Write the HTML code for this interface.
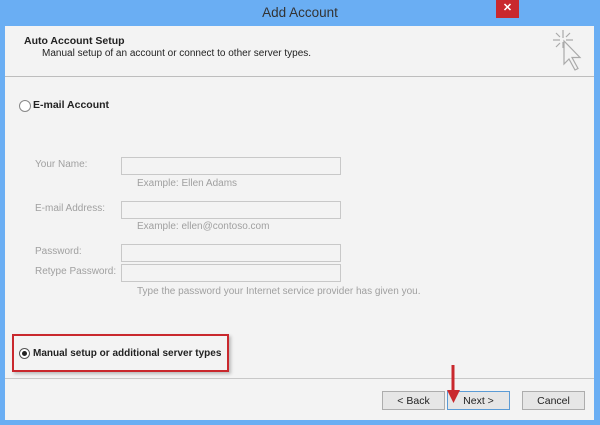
<!DOCTYPE html>
<html><head><style>
body{margin:0;width:600px;height:425px;background:#6aaef3;position:relative;overflow:hidden;font-family:"Liberation Sans",sans-serif;font-size:11px;color:#222}
.a{position:absolute}
.in{position:absolute;left:121px;width:218px;height:16px;border:1px solid #c8c8c8;background:#f3f3f3}
.lb{position:absolute;left:35px;color:#a0a0a0;font-size:10px}
.ex{position:absolute;left:137px;color:#a0a0a0;font-size:10px}
.btn{position:absolute;top:391px;height:17px;border:1px solid #adadad;background:#e6e6e6;text-align:center;line-height:18px;font-size:10.5px}
</style></head><body>
<div class="a" style="left:0;width:600px;text-align:center;top:5px;font-size:13.5px;color:#333">Add Account</div>
<div class="a" style="left:496px;top:0;width:23px;height:18px;background:#c9282d;color:#fff;text-align:center;line-height:17px;font-size:11px;font-weight:bold">✕</div>
<div class="a" style="left:5px;top:26px;width:589px;height:394px;background:#f3f3f3"></div>
<div class="a" style="left:5px;top:76px;width:589px;height:1px;background:#bdbdbd"></div>
<div class="a" style="left:24px;top:35px;font-weight:bold;font-size:10.5px">Auto Account Setup</div>
<div class="a" style="left:42px;top:48px;font-size:10px">Manual setup of an account or connect to other server types.</div>
<svg class="a" style="left:550px;top:28px" width="40" height="48"><g stroke="#aaa" stroke-width="1.2" fill="none"><path d="M13 2v8M13 14v6M3 12h7M16 12h7M6 5l4 4M20 5l-4 4M6 19l4-4"/><path d="M14 13v23l5-5 6 11 3-1.5-6-11h8z" fill="#f3f3f3"/></g></svg>
<div class="a" style="left:19px;top:100px;width:10px;height:10px;border:1px solid #888;border-radius:50%;background:#fff"></div>
<div class="a" style="left:33px;top:99px;font-weight:bold;font-size:10.5px">E-mail Account</div>
<div class="lb" style="top:159px">Your Name:</div><div class="in" style="top:157px"></div>
<div class="ex" style="top:178px">Example: Ellen Adams</div>
<div class="lb" style="top:203px">E-mail Address:</div><div class="in" style="top:201px"></div>
<div class="ex" style="top:221px">Example: ellen@contoso.com</div>
<div class="lb" style="top:246px">Password:</div><div class="in" style="top:244px"></div>
<div class="lb" style="top:266px">Retype Password:</div><div class="in" style="top:264px"></div>
<div class="ex" style="top:286px">Type the password your Internet service provider has given you.</div>
<div class="a" style="left:12px;top:334px;width:213px;height:34px;border:2px solid #c9282d;box-shadow:2px 2px 3px #bbb"></div>
<div class="a" style="left:19px;top:348px;width:9px;height:9px;border:1px solid #555;border-radius:50%;background:#fff"></div>
<div class="a" style="left:22px;top:351px;width:5px;height:5px;border-radius:50%;background:#222"></div>
<div class="a" style="left:33px;top:348px;font-weight:bold;font-size:10px">Manual setup or additional server types</div>
<div class="a" style="left:5px;top:378px;width:589px;height:1px;background:#c8c8c8"></div>
<div class="btn" style="left:382px;width:61px">&lt; Back</div>
<div class="btn" style="left:447px;width:61px;border-color:#5b9bd5">Next &gt;</div>
<div class="btn" style="left:522px;width:61px">Cancel</div>
<svg class="a" style="left:445px;top:363px" width="18" height="42"><path d="M8 2v28" stroke="#c9282d" stroke-width="3"/><path d="M2 27h13l-6.5 13z" fill="#c9282d"/></svg>
</body></html>
